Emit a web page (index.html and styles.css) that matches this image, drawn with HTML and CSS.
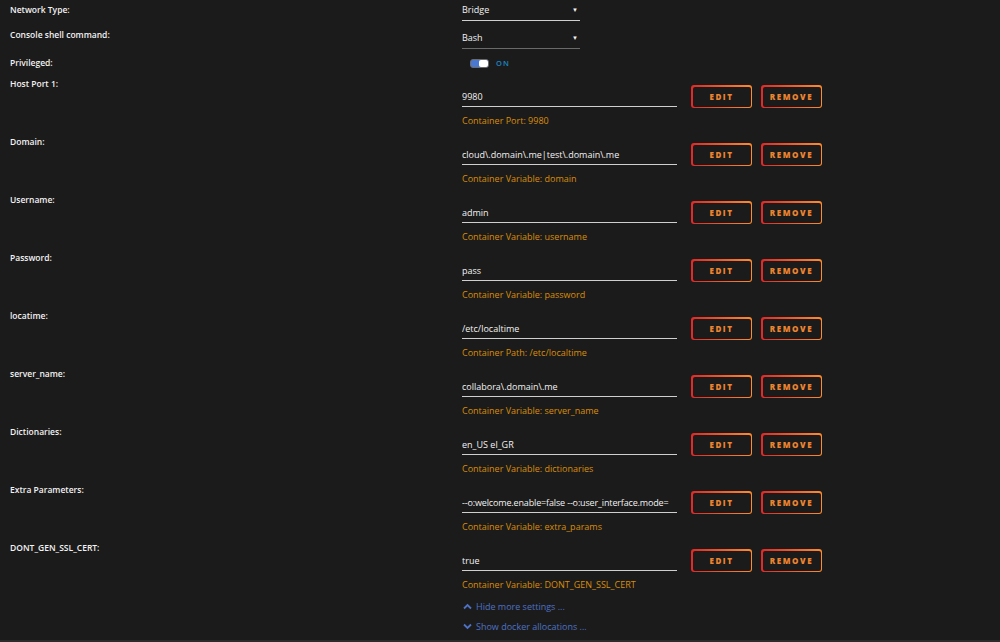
FILE: index.html
```html
<!DOCTYPE html>
<html lang="en">

<head>
    <meta charset="UTF-8">
    <title>Update Container</title>
    <link rel="stylesheet" href="styles.css">
</head>

<body>
    <div class="form">
        <!-- basic settings -->
        <div class="row first">
            <div class="label">Network Type:</div>
            <div class="field">
                <div class="select">Bridge<span class="caret">&#9660;</span></div>
            </div>
        </div>
        <div class="row second">
            <div class="label">Console shell command:</div>
            <div class="field">
                <div class="select dim">Bash<span class="caret">&#9660;</span></div>
            </div>
        </div>
        <div class="row third">
            <div class="label">Privileged:</div>
            <div class="field">
                <span class="switch"><span class="knob"></span></span>
                <span class="on">ON</span>
            </div>
        </div>

        <!-- config entries -->
        <div class="config">
            <div class="label">Host Port 1:</div>
            <div class="field">
                <div class="line">
                    <div class="input">9980</div>
                    <button class="btn"><span>EDIT</span></button>
                    <button class="btn"><span>REMOVE</span></button>
                </div>
                <div class="desc">Container Port: 9980</div>
            </div>
        </div>
        <div class="config">
            <div class="label">Domain:</div>
            <div class="field">
                <div class="line">
                    <div class="input">cloud\.domain\.me|test\.domain\.me</div>
                    <button class="btn"><span>EDIT</span></button>
                    <button class="btn"><span>REMOVE</span></button>
                </div>
                <div class="desc">Container Variable: domain</div>
            </div>
        </div>
        <div class="config">
            <div class="label">Username:</div>
            <div class="field">
                <div class="line">
                    <div class="input">admin</div>
                    <button class="btn"><span>EDIT</span></button>
                    <button class="btn"><span>REMOVE</span></button>
                </div>
                <div class="desc">Container Variable: username</div>
            </div>
        </div>
        <div class="config">
            <div class="label">Password:</div>
            <div class="field">
                <div class="line">
                    <div class="input">pass</div>
                    <button class="btn"><span>EDIT</span></button>
                    <button class="btn"><span>REMOVE</span></button>
                </div>
                <div class="desc">Container Variable: password</div>
            </div>
        </div>
        <div class="config">
            <div class="label">locatime:</div>
            <div class="field">
                <div class="line">
                    <div class="input">/etc/localtime</div>
                    <button class="btn"><span>EDIT</span></button>
                    <button class="btn"><span>REMOVE</span></button>
                </div>
                <div class="desc">Container Path: /etc/localtime</div>
            </div>
        </div>
        <div class="config">
            <div class="label">server_name:</div>
            <div class="field">
                <div class="line">
                    <div class="input">collabora\.domain\.me</div>
                    <button class="btn"><span>EDIT</span></button>
                    <button class="btn"><span>REMOVE</span></button>
                </div>
                <div class="desc">Container Variable: server_name</div>
            </div>
        </div>
        <div class="config">
            <div class="label">Dictionaries:</div>
            <div class="field">
                <div class="line">
                    <div class="input">en_US el_GR</div>
                    <button class="btn"><span>EDIT</span></button>
                    <button class="btn"><span>REMOVE</span></button>
                </div>
                <div class="desc">Container Variable: dictionaries</div>
            </div>
        </div>
        <div class="config">
            <div class="label">Extra Parameters:</div>
            <div class="field">
                <div class="line">
                    <div class="input tight">--o:welcome.enable=false --o:user_interface.mode=</div>
                    <button class="btn"><span>EDIT</span></button>
                    <button class="btn"><span>REMOVE</span></button>
                </div>
                <div class="desc">Container Variable: extra_params</div>
            </div>
        </div>
        <div class="config">
            <div class="label">DONT_GEN_SSL_CERT:</div>
            <div class="field">
                <div class="line">
                    <div class="input">true</div>
                    <button class="btn"><span>EDIT</span></button>
                    <button class="btn"><span>REMOVE</span></button>
                </div>
                <div class="desc">Container Variable: DONT_GEN_SSL_CERT</div>
            </div>
        </div>

        <!-- toggles -->
        <div class="links">
            <a class="more">
                <svg width="9" height="7" viewBox="0 0 9 7"><path d="M1 5.5 L4.5 2 L8 5.5" fill="none" stroke="#4d72c4" stroke-width="1.8"/></svg>
                Hide more settings ...
            </a>
            <a class="more">
                <svg width="9" height="7" viewBox="0 0 9 7"><path d="M1 1.5 L4.5 5 L8 1.5" fill="none" stroke="#4d72c4" stroke-width="1.8"/></svg>
                Show docker allocations ...
            </a>
        </div>
    </div>
    <div class="footer"></div>
</body>

</html>
```
FILE: styles.css
```css
html,
body {
    margin: 0;
    height: 100%;
}

body {
    background-color: #1c1b1b;
    color: #f2f2f2;
    font-family: "Open Sans", "Noto Sans", sans-serif;
    font-size: 9px;
    overflow: hidden;
    display: flex;
    flex-direction: column;
}

.form {
    flex: 1;
}

.row,
.config {
    display: grid;
    grid-template-columns: 462px 1fr;
}

.label {
    padding-left: 10px;
    font-weight: 600;
    line-height: 12px;
    font-size: 8.5px;
}

.row.first {
    height: 28px;
}

.row.first .label {
    padding-top: 4px;
}

.row.second {
    height: 28px;
}

.row.second .label {
    padding-top: 1px;
}

.row.third {
    height: 22px;
}

.row.third .label {
    padding-top: 1px;
}

.select {
    width: 118px;
    height: 20px;
    line-height: 20px;
    border-bottom: 1px solid #cfcfcf;
    position: relative;
    font-size: 9px;
}

.select.dim {
    border-bottom-color: #6a6a6a;
}

.caret {
    position: absolute;
    right: 2px;
    top: 0;
    font-size: 6px;
}

.row.third .field {
    display: flex;
    align-items: center;
    height: 12px;
    margin-top: 1px;
}

.switch {
    display: inline-flex;
    justify-content: flex-end;
    margin-left: 8px;
    width: 19px;
    height: 9px;
    box-sizing: border-box;
    border-radius: 3px;
    background-color: #4a78d0;
    border: 1px solid #6b6b6b;
}

.knob {
    width: 9px;
    height: 7px;
    background-color: #ffffff;
    border-radius: 2px;
}

.on {
    margin-left: 7px;
    color: #1a84c4;
    font-size: 7.5px;
    font-weight: 600;
    letter-spacing: 1px;
}

.config {
    height: 58px;
}

.config .field {
    padding-top: 7px;
}

.line {
    display: flex;
    align-items: flex-start;
}

.input {
    width: 215px;
    height: 21px;
    line-height: 20px;
    margin-top: 1px;
    border-bottom: 1px solid #cfcfcf;
    box-sizing: border-box;
    white-space: nowrap;
    overflow: hidden;
    margin-right: 14px;
    padding-top: 1px;
}

.input.tight {
    letter-spacing: -0.15px;
}

/* gradient frame: outer gradient, inner dark fill */
.btn {
    display: flex;
    width: 61px;
    height: 23px;
    margin: 0 9px 0 0;
    padding: 1.5px;
    border: none;
    border-radius: 3px;
    background: linear-gradient(90deg, #e22828 0%, #ff8c2f 100%);
    font-family: "Open Sans", sans-serif;
}

.btn span {
    flex: 1;
    display: flex;
    align-items: center;
    justify-content: center;
    border-radius: 2px;
    background-color: #1c1b1b;
    color: #ec8430;
    font-size: 8px;
    font-weight: 800;
    letter-spacing: 1.6px;
}

.desc {
    margin-top: 7px;
    line-height: 12px;
    color: #d88d08;
}

.links {
    padding-left: 463px;
}

.more {
    display: flex;
    align-items: center;
    gap: 4px;
    height: 12px;
    margin-bottom: 8px;
    color: #4d72c4;
    font-size: 9px;
}

.footer {
    height: 5px;
    background-color: #2b2b2b;
}
```
